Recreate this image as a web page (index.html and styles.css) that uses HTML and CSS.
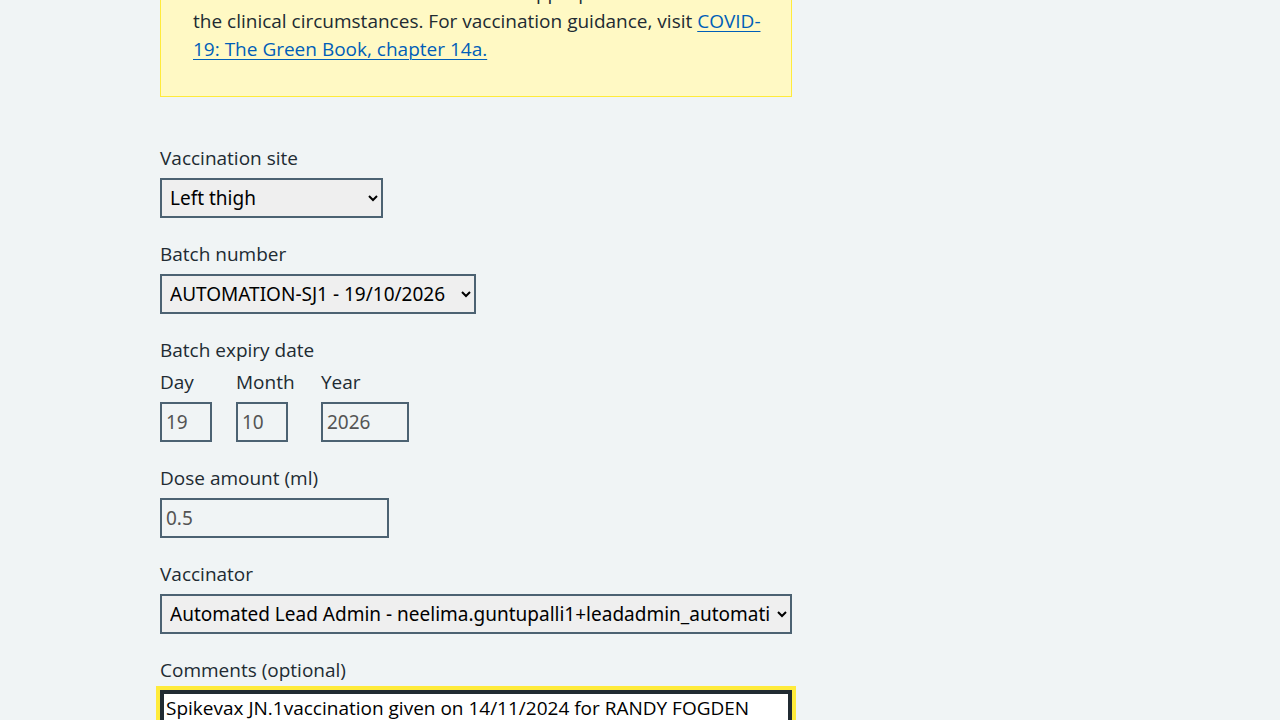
FILE: index.html
```html
<!DOCTYPE html>
<html lang="en">
<head>
<meta charset="utf-8">
<title>Record vaccination</title>
<link rel="stylesheet" href="styles.css">
</head>
<body>
<main class="page">
  <div class="container">
    <div class="column">
      <div class="callout">
        <p class="callout-text">The vaccine product to give depends on the patient's age and<br>the vaccinator must check that this is appropriate for<br>the clinical circumstances. For vaccination guidance, visit <a href="#" class="link">COVID-<br>19: The Green Book, chapter 14a.</a></p>
      </div>

      <form class="form">
        <div class="form-group">
          <label class="label" for="site">Vaccination site</label>
          <select class="select select-site" id="site">
            <option>Left thigh</option>
            <option>Right thigh</option>
            <option>Left upper arm</option>
            <option>Right upper arm</option>
          </select>
        </div>

        <div class="form-group">
          <label class="label" for="batch">Batch number</label>
          <select class="select select-batch" id="batch">
            <option>AUTOMATION-SJ1 - 19/10/2026</option>
          </select>
        </div>

        <fieldset class="form-group fieldset">
          <legend class="label legend">Batch expiry date</legend>
          <div class="date-input">
            <div class="date-item">
              <label class="label" for="day">Day</label>
              <input class="input input-day" id="day" type="text" value="19" readonly>
            </div>
            <div class="date-item date-item-month">
              <label class="label" for="month">Month</label>
              <input class="input input-month" id="month" type="text" value="10" readonly>
            </div>
            <div class="date-item">
              <label class="label" for="year">Year</label>
              <input class="input input-year" id="year" type="text" value="2026" readonly>
            </div>
          </div>
        </fieldset>

        <div class="form-group">
          <label class="label" for="dose">Dose amount (ml)</label>
          <input class="input input-dose" id="dose" type="text" value="0.5" readonly>
        </div>

        <div class="form-group">
          <label class="label" for="vaccinator">Vaccinator</label>
          <select class="select select-full" id="vaccinator">
            <option>Automated Lead Admin - neelima.guntupalli1+leadadmin_automation@nhs.net</option>
          </select>
        </div>

        <div class="form-group">
          <label class="label" for="comments">Comments (optional)</label>
          <textarea class="textarea is-focused" id="comments" rows="4">Spikevax JN.1vaccination given on 14/11/2024 for RANDY FOGDEN</textarea>
        </div>
      </form>
    </div>
  </div>
</main>
</body>
</html>
```
FILE: styles.css
```css
* {
  box-sizing: border-box;
}

html, body {
  margin: 0;
  padding: 0;
  background: #f0f4f5;
}

body {
  font-family: "Open Sans", "Noto Sans", sans-serif;
  font-size: 19px;
  line-height: 28px;
  color: #212b32;
  overflow: hidden;
}

.page {
  margin-top: -83px;
}

.container {
  width: 960px;
  margin: 0 auto;
}

.column {
  width: 632px;
}

.callout {
  background: #fff9c4;
  border: 1px solid #ffeb3b;
  padding: 33px 32px 33px;
  margin-bottom: 49px;
}

.callout-text {
  margin: 0;
  white-space: nowrap;
}

.link {
  color: #005eb8;
  text-decoration: underline;
  text-underline-offset: 3px;
  text-decoration-thickness: 1px;
}

.form-group {
  margin: 0 0 24px;
}

.fieldset {
  border: 0;
  padding: 0;
  min-width: 0;
}

.label {
  display: block;
  margin: 0 0 4px;
  padding: 0 0 4px;
  font-size: 19px;
  line-height: 24px;
  color: #212b32;
}

.legend {
  padding: 0 0 4px;
}

.select {
  display: block;
  height: 40px;
  padding: 0 4px 0 4px;
  border: 2px solid #4c6272;
  border-radius: 0;
  background-color: #efefef;
  color: #000;
  font-family: "Noto Sans", "Open Sans", sans-serif;
  font-size: 19px;
}

.select-site {
  width: 223px;
}

.select-batch {
  width: 316px;
}

.select-full {
  width: 632px;
}

.date-input {
  display: flex;
}

.date-item {
  margin-right: 24px;
}

.date-item-month {
  min-width: 61px;
}

.input {
  display: block;
  height: 40px;
  padding: 4px;
  border: 2px solid #4c6272;
  border-radius: 0;
  background: transparent;
  color: #545454;
  font-family: "Noto Sans", "Open Sans", sans-serif;
  font-size: 19px;
  outline: none;
}

.input-day,
.input-month {
  width: 52px;
}

.input-year {
  width: 88px;
}

.input-dose {
  width: 229px;
}

.textarea {
  display: block;
  width: 632px;
  padding: 2px 4px;
  border: 2px solid #212b32;
  border-radius: 0;
  background: #fff;
  color: #000;
  font-family: "Open Sans", "Noto Sans", sans-serif;
  font-size: 19px;
  line-height: 28px;
  resize: vertical;
}

.textarea.is-focused {
  outline: 4px solid #ffeb3b;
  outline-offset: 0;
  box-shadow: inset 0 0 0 2px #212b32;
}
```
